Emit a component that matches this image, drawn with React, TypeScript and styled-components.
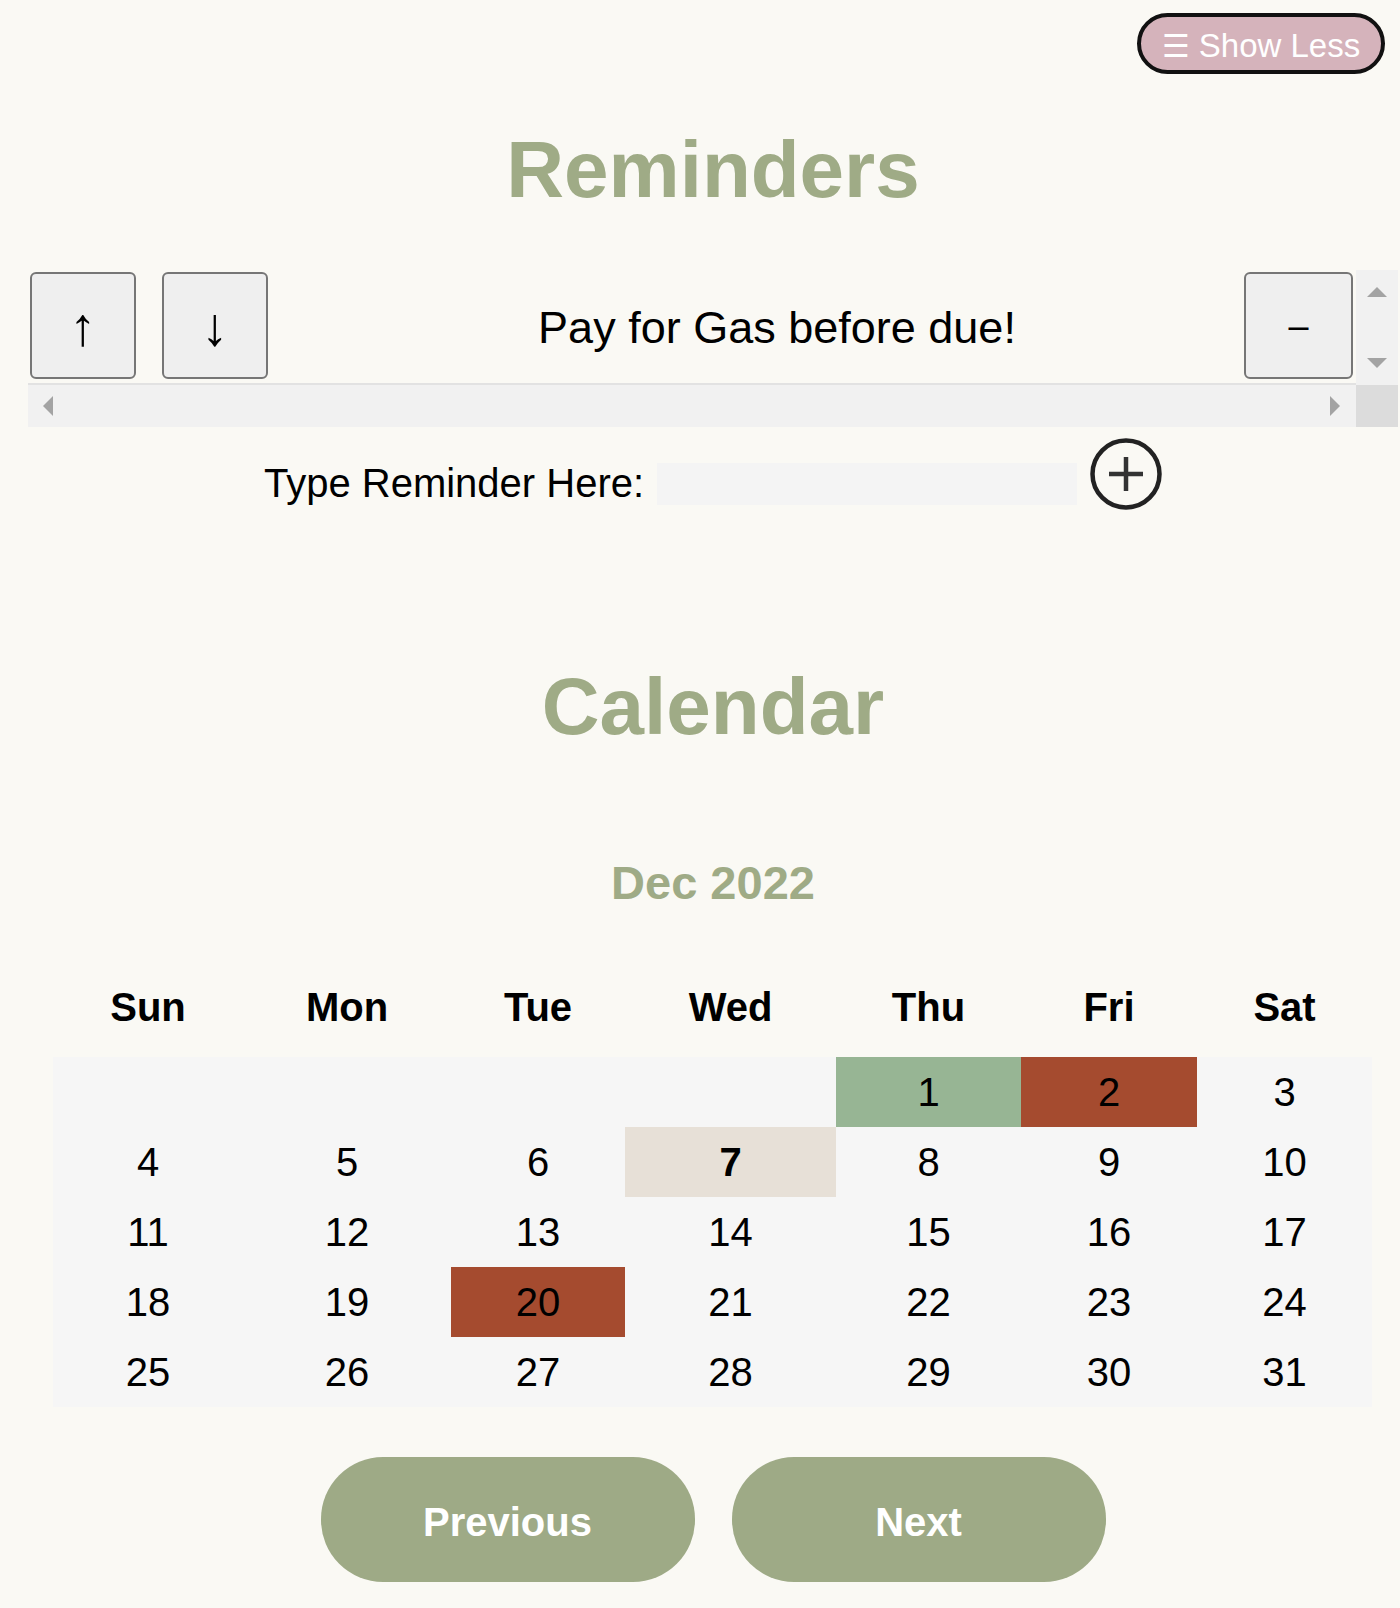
import React from "react";
import styled, { createGlobalStyle } from "styled-components";

const GlobalStyle = createGlobalStyle`
  html, body { margin: 0; padding: 0; background: #faf9f4; }
  body { font-family: "Liberation Sans", Arial, sans-serif; color: #000; }
  * { box-sizing: border-box; }
`;

const Page = styled.div`
  width: 1400px;
  padding: 13px 2px 26px 28px;
  display: flex;
  flex-direction: column;
`;

const TopBar = styled.header`
  display: flex;
  justify-content: flex-end;
  padding-right: 13px;
`;

const ToggleButton = styled.button`
  width: 248px;
  height: 61px;
  border: 4px solid #111;
  border-radius: 31px;
  background: #d5b3bb;
  color: #fff;
  font-family: "Liberation Sans", "DejaVu Sans", Arial, sans-serif;
  font-size: 33px;
  display: flex;
  align-items: center;
  justify-content: center;
  gap: 9px;
  padding: 5px 0 0;
  cursor: pointer;
`;

const MenuGlyph = styled.span`
  font-family: "DejaVu Sans", sans-serif;
  font-size: 31px;
  font-weight: 300;
`;

const SectionTitle = styled.h1<{ $top: number }>`
  margin: ${(p) => p.$top}px 0 0;
  font-size: 80px;
  line-height: 92px;
  font-weight: bold;
  color: #9fab86;
  text-align: center;
`;

const ReminderBox = styled.section`
  margin-top: 54px;
  display: grid;
  grid-template-columns: 1fr 42px;
  grid-template-rows: 115px 42px;
`;

const Viewport = styled.div`
  display: flex;
  align-items: flex-start;
  padding: 2px 3px 0 2px;
  border-bottom: 2px solid #e2e2e2;
`;

const ListButton = styled.button<{ $w: number; $size: number }>`
  width: ${(p) => p.$w}px;
  height: 107px;
  flex: none;
  background: #efefef;
  border: 2px solid #767676;
  border-radius: 6px;
  font-family: "Liberation Sans", "DejaVu Sans", Arial, sans-serif;
  font-size: ${(p) => p.$size}px;
  color: #000;
  padding: 0;
  display: flex;
  align-items: center;
  justify-content: center;
`;

const ArrowGroup = styled.div`
  display: flex;
  gap: 26px;
`;

const ReminderText = styled.p`
  flex: 1;
  margin: 0;
  align-self: center;
  padding-left: 42px;
  text-align: center;
  font-size: 45px;
  line-height: 52px;
`;

const VRail = styled.div`
  background: #f1f1f1;
  display: flex;
  flex-direction: column;
  align-items: center;
  justify-content: space-between;
  padding: 17px 0;
`;

const HRail = styled.div`
  background: #f1f1f1;
  display: flex;
  align-items: center;
  justify-content: space-between;
  padding: 0 16px 0 15px;
`;

const Corner = styled.div`
  background: #dcdcdc;
`;

const Tri = styled.span<{ $dir: "up" | "down" | "left" | "right" }>`
  width: 0;
  height: 0;
  display: block;
  ${(p) =>
    p.$dir === "up"
      ? "border-left:10px solid transparent;border-right:10px solid transparent;border-bottom:10px solid #a3a3a3;"
      : p.$dir === "down"
      ? "border-left:10px solid transparent;border-right:10px solid transparent;border-top:10px solid #a3a3a3;"
      : p.$dir === "left"
      ? "border-top:10px solid transparent;border-bottom:10px solid transparent;border-right:10px solid #a3a3a3;"
      : "border-top:10px solid transparent;border-bottom:10px solid transparent;border-left:10px solid #a3a3a3;"}
`;

const TypeRow = styled.div`
  margin-top: 11px;
  display: flex;
  justify-content: center;
  align-items: flex-start;
  gap: 13px;
`;

const TypeLabel = styled.label`
  margin-top: 22px;
  font-size: 40px;
  line-height: 46px;
`;

const TypeInput = styled.input`
  margin-top: 25px;
  width: 420px;
  height: 42px;
  border: none;
  background: #f4f4f4;
  font-size: 30px;
  font-family: "Liberation Sans", Arial, sans-serif;
`;

const AddButton = styled.button`
  width: 72px;
  height: 72px;
  padding: 0;
  border: none;
  background: transparent;
  display: block;
`;

const MonthTitle = styled.h2`
  margin: 102px 0 0;
  font-size: 47px;
  line-height: 56px;
  font-weight: bold;
  color: #9fab86;
  text-align: center;
`;

const Calendar = styled.div`
  margin: 73px 26px 0 25px;
  display: flex;
  flex-direction: column;
  gap: 27px;
`;

const cols = "190px 208px 174px 211px 185px 176px 175px";

const WeekHeader = styled.div`
  display: grid;
  grid-template-columns: ${cols};
`;

const DayName = styled.div`
  text-align: center;
  font-size: 40px;
  line-height: 46px;
  font-weight: bold;
`;

const DayGrid = styled.div`
  display: grid;
  grid-template-columns: ${cols};
  grid-auto-rows: 70px;
  background: #f6f6f6;
`;

const tones: Record<string, string> = {
  none: "transparent",
  done: "#97b594",
  due: "#a54b2f",
  today: "#e7e0d7",
};

const DayCell = styled.div<{ $tone: string }>`
  display: flex;
  align-items: center;
  justify-content: center;
  font-size: 40px;
  font-weight: ${(p) => (p.$tone === "today" ? "bold" : "normal")};
  background: ${(p) => tones[p.$tone]};
`;

const NavRow = styled.div`
  margin-top: 50px;
  display: flex;
  justify-content: center;
  gap: 37px;
`;

const NavButton = styled.button`
  width: 374px;
  height: 125px;
  border: none;
  border-radius: 62px;
  background: #9eaa86;
  color: #fff;
  font-family: "Liberation Sans", Arial, sans-serif;
  font-size: 40px;
  font-weight: bold;
  padding: 6px 0 0;
  cursor: pointer;
`;

const days = ["Sun", "Mon", "Tue", "Wed", "Thu", "Fri", "Sat"];
const special: Record<number, string> = { 1: "done", 2: "due", 7: "today", 20: "due" };

export default function App() {
  const cells: (number | null)[] = [null, null, null, null];
  for (let d = 1; d <= 31; d++) cells.push(d);

  return (
    <>
      <GlobalStyle />
      <Page>
        <TopBar>
          <ToggleButton>
            <MenuGlyph>☰</MenuGlyph>
            <span>Show Less</span>
          </ToggleButton>
        </TopBar>

        <SectionTitle $top={50}>Reminders</SectionTitle>

        <ReminderBox>
          <Viewport>
            <ArrowGroup>
              <ListButton $w={106} $size={54}>↑</ListButton>
              <ListButton $w={106} $size={54}>↓</ListButton>
            </ArrowGroup>
            <ReminderText>Pay for Gas before due!</ReminderText>
            <ListButton $w={109} $size={36}>–</ListButton>
          </Viewport>
          <VRail>
            <Tri $dir="up" />
            <Tri $dir="down" />
          </VRail>
          <HRail>
            <Tri $dir="left" />
            <Tri $dir="right" />
          </HRail>
          <Corner />
        </ReminderBox>

        <TypeRow>
          <TypeLabel>Type Reminder Here:</TypeLabel>
          <TypeInput type="text" />
          <AddButton aria-label="Add reminder">
            <svg width="72" height="72" viewBox="0 0 72 72">
              <circle cx="36" cy="36" r="33.5" fill="none" stroke="#222" strokeWidth="4.5" />
              <line x1="36" y1="19" x2="36" y2="53" stroke="#333" strokeWidth="4.5" />
              <line x1="19" y1="36" x2="53" y2="36" stroke="#333" strokeWidth="4.5" />
            </svg>
          </AddButton>
        </TypeRow>

        <SectionTitle $top={151}>Calendar</SectionTitle>
        <MonthTitle>Dec 2022</MonthTitle>

        <Calendar>
          <WeekHeader>
            {days.map((d) => (
              <DayName key={d}>{d}</DayName>
            ))}
          </WeekHeader>
          <DayGrid>
            {cells.map((d, i) => (
              <DayCell key={i} $tone={d ? special[d] ?? "none" : "none"}>
                {d ?? ""}
              </DayCell>
            ))}
          </DayGrid>
        </Calendar>

        <NavRow>
          <NavButton>Previous</NavButton>
          <NavButton>Next</NavButton>
        </NavRow>
      </Page>
    </>
  );
}
